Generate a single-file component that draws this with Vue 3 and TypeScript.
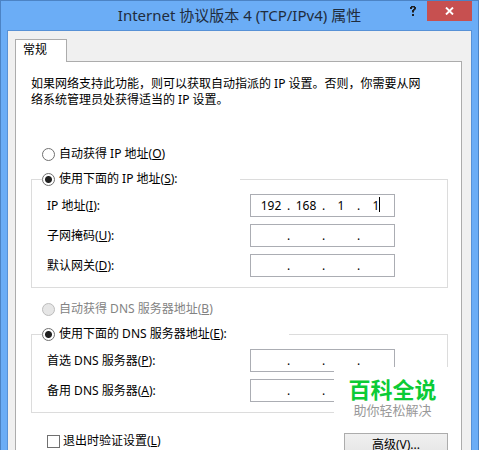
<script setup lang="ts">
import { ref } from 'vue'

interface AddressRow {
  id: string
  label: string
  key: string
  octets: string[]
  active?: boolean
}

const ipMode = ref('manual')
const dnsMode = ref('manual')
const validateOnExit = ref(false)

const ipRows = ref<AddressRow[]>([
  { id: 'ip', label: 'IP 地址', key: 'I', octets: ['192', '168', '1', '1'], active: true },
  { id: 'mask', label: '子网掩码', key: 'U', octets: ['', '', '', ''] },
  { id: 'gateway', label: '默认网关', key: 'D', octets: ['', '', '', ''] },
])

const dnsRows = ref<AddressRow[]>([
  { id: 'dns1', label: '首选 DNS 服务器', key: 'P', octets: ['', '', '', ''] },
  { id: 'dns2', label: '备用 DNS 服务器', key: 'A', octets: ['', '', '', ''] },
])
</script>

<template>
  <div class="window">
    <header class="titlebar">
      <h1 class="title">Internet 协议版本 4 (TCP/IPv4) 属性</h1>
      <div class="controls">
        <button class="help" type="button" aria-label="帮助">
          <svg width="8" height="12" viewBox="0 0 8 12" aria-hidden="true">
            <path d="M1 3V1.9H2V1H6V1.9H7V4.5H6V5.5H5V7.5H3V5H4V4H5V2.5H3V4H1zM3 9H5V11H3z" fill="#1e2125" />
          </svg>
        </button>
        <button class="close" type="button" aria-label="关闭">
          <svg width="9" height="8" viewBox="0 0 9 8" aria-hidden="true">
            <path d="M1 0.5L8 7.5M8 0.5L1 7.5" stroke="#fff" stroke-width="1.9" fill="none" />
          </svg>
        </button>
      </div>
    </header>

    <main class="client">
      <div class="tabs" role="tablist">
        <button class="tab" type="button" role="tab" aria-selected="true">常规</button>
      </div>

      <form class="panel" @submit.prevent>
        <p class="intro">
          如果网络支持此功能，则可以获取自动指派的 IP 设置。否则，你需要从网<br />络系统管理员处获得适当的 IP 设置。
        </p>

        <label class="choice">
          <input v-model="ipMode" class="radio" type="radio" name="ip-mode" value="auto" />
          <span>自动获得 IP 地址(<u>O</u>)</span>
        </label>

        <fieldset class="group">
          <legend>
            <label class="choice">
              <input v-model="ipMode" class="radio" type="radio" name="ip-mode" value="manual" />
              <span>使用下面的 IP 地址(<u>S</u>):</span>
            </label>
          </legend>
          <div v-for="row in ipRows" :key="row.id" class="row">
            <label :for="row.id + '-0'">{{ row.label }}(<u>{{ row.key }}</u>):</label>
            <div class="address">
              <template v-for="(_, i) in row.octets" :key="i">
                <span v-if="i > 0" class="dot">.</span>
                <input :id="row.id + '-' + i" v-model="row.octets[i]" class="octet" type="text" maxlength="3" :aria-label="row.label + ' ' + (i + 1)" />
              </template>
              <span v-if="row.active" class="caret"></span>
            </div>
          </div>
        </fieldset>

        <label class="choice disabled">
          <input v-model="dnsMode" class="radio" type="radio" name="dns-mode" value="auto" disabled />
          <span>自动获得 DNS 服务器地址(<u>B</u>)</span>
        </label>

        <fieldset class="group">
          <legend>
            <label class="choice">
              <input v-model="dnsMode" class="radio" type="radio" name="dns-mode" value="manual" />
              <span>使用下面的 DNS 服务器地址(<u>E</u>):</span>
            </label>
          </legend>
          <div v-for="row in dnsRows" :key="row.id" class="row">
            <label :for="row.id + '-0'">{{ row.label }}(<u>{{ row.key }}</u>):</label>
            <div class="address">
              <template v-for="(_, i) in row.octets" :key="i">
                <span v-if="i > 0" class="dot">.</span>
                <input :id="row.id + '-' + i" v-model="row.octets[i]" class="octet" type="text" maxlength="3" :aria-label="row.label + ' ' + (i + 1)" />
              </template>
            </div>
          </div>
          <div class="badge">
            <strong>百科全说</strong>
            <span>助你轻松解决</span>
          </div>
        </fieldset>

        <div class="footer">
          <label class="choice">
            <input v-model="validateOnExit" class="checkbox" type="checkbox" />
            <span>退出时验证设置(<u>L</u>)</span>
          </label>
          <button class="advanced" type="button">高级(V)...</button>
        </div>
      </form>
    </main>
  </div>
</template>

<style>
body {
  margin: 0;
}
</style>

<style scoped>
* {
  box-sizing: border-box;
}

.window {
  height: 100vh;
  overflow: hidden;
  padding: 0 6px;
  border: 1px solid #4c83c4;
  border-bottom: 0;
  background: #6badf6;
  color: #000;
  font: 12px/16px "Noto Sans", "Noto Sans CJK SC", sans-serif;
}

button,
input {
  margin: 0;
  padding: 0;
  border: 0;
  border-radius: 0;
  color: inherit;
  font: inherit;
}

.titlebar {
  position: relative;
  height: 29px;
}

.title {
  margin: 0;
  color: #1f2c3d;
  font-size: 15px;
  font-weight: 400;
  line-height: 29px;
  text-align: center;
}

.controls {
  position: absolute;
  top: 0;
  right: 0;
  display: flex;
}

.help,
.close {
  display: flex;
  align-items: center;
  justify-content: center;
  height: 20px;
}

.help {
  width: 28px;
  background: none;
}

.close {
  width: 45px;
  background: #c75050;
}

.client {
  padding: 8px 9px 40px 7px;
  border: 1px solid #5791d6;
  border-bottom: 0;
  background: #f0f0f0;
}

.tabs {
  display: flex;
}

.tab {
  position: relative;
  width: 52px;
  height: 23px;
  margin-bottom: -1px;
  padding: 0 0 2px 7px;
  border: 1px solid #acacac;
  border-bottom: 0;
  background: #fff;
  text-align: left;
}

.panel {
  padding: 14px 13px 20px 15px;
  border: 1px solid #acacac;
  background: #fff;
}

.intro {
  margin: 0 0 37px;
  white-space: nowrap;
}

.choice {
  display: flex;
  align-items: center;
  gap: 4px;
  height: 18px;
  white-space: nowrap;
}

.panel > .choice {
  margin-left: 11px;
}

.disabled {
  color: #838383;
}

.radio,
.checkbox {
  flex: none;
  appearance: none;
  width: 13px;
  height: 13px;
  border: 1px solid #707070;
  background: #fff;
}

.radio {
  border-radius: 50%;
}

.radio:checked {
  background: radial-gradient(circle, #212121 3px, #fff 4px);
}

.radio:disabled {
  border-color: #bcbcbc;
  background: #e6e6e6;
}

.checkbox:checked {
  background: #212121;
  box-shadow: inset 0 0 0 2px #fff;
}

.group {
  position: relative;
  display: flex;
  flex-direction: column;
  gap: 7px;
  min-width: 0;
  margin: 7px 0 12px;
  padding: 6px 0 10px;
  border: 1px solid #dcdcdc;
}

legend {
  margin-left: 10px;
  padding: 0 62px 0 0;
}

.row {
  display: flex;
  align-items: center;
  justify-content: space-between;
  height: 23px;
  padding: 0 52px 0 15px;
}

.address {
  position: relative;
  display: flex;
  align-items: center;
  width: 145px;
  height: 23px;
  padding-left: 6px;
  border: 1px solid #abadb3;
  background: #fff;
}

.octet {
  width: 28px;
  height: 16px;
  outline: 0;
  background: none;
  text-align: center;
}

.dot {
  width: 7px;
  text-align: center;
}

.caret {
  position: absolute;
  top: 2px;
  right: 14px;
  width: 1px;
  height: 15px;
  background: #000;
}

.badge {
  position: absolute;
  right: -4px;
  bottom: -16px;
  display: flex;
  flex-direction: column;
  align-items: center;
  width: 117px;
  padding: 9px 0;
  background: #fff;
}

.badge strong {
  color: #0bcb36;
  font-size: 22px;
  font-weight: 700;
  line-height: 26px;
}

.badge span {
  color: #999;
  font-size: 13px;
  line-height: 17px;
}

.footer {
  display: flex;
  align-items: flex-start;
  justify-content: space-between;
  padding: 8px 0 0 16px;
}

.footer .choice {
  gap: 3px;
  height: 16px;
}

.advanced {
  width: 104px;
  height: 23px;
  border: 1px solid #acacac;
  background: linear-gradient(#f0f0f0, #e5e5e5);
}
</style>
